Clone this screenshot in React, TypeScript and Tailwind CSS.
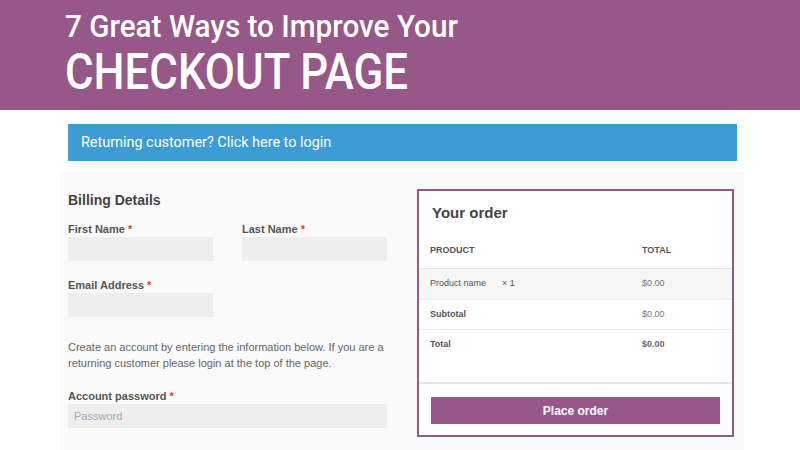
import React from 'react';

const Req = () => <span className="text-[#e2401c]"> *</span>;

function Field({ label, className, placeholder }: { label: string; className?: string; placeholder?: string }) {
  return (
    <div className={className}>
      <div className="text-[11px] leading-[14px] font-bold text-[#555]">
        {label}
        <Req />
      </div>
      <div className="mt-[1px] h-[24px] bg-[#eeeeee] flex items-center px-[6px] text-[11px] text-[#a8a8a8]">
        {placeholder}
      </div>
    </div>
  );
}

function OrderRow({ label, value, bold, shaded, qty }: { label: string; value: string; bold?: boolean; shaded?: boolean; qty?: string }) {
  return (
    <div className={`h-[30px] flex items-center border-t border-[#ebebeb] px-[11px] text-[9px] ${shaded ? 'bg-[#f6f6f6]' : ''}`}>
      <div className={`w-[212px] flex ${bold ? 'font-bold text-[#555]' : 'text-[#555]'}`}>
        <span>{label}</span>
        {qty && <span className="ml-[16px]">{qty}</span>}
      </div>
      <div className={bold && label === 'Total' ? 'font-bold text-[#666]' : 'text-[#777]'}>{value}</div>
    </div>
  );
}

export default function App() {
  return (
    <div className="w-[800px] h-[450px] bg-white overflow-hidden" style={{ fontFamily: '"Liberation Sans", Arial, sans-serif' }}>
      {/* Banner */}
      <div className="h-[110px] bg-[#955888] pl-[65px] pt-[6px] text-white" style={{ fontFamily: 'Roboto, sans-serif' }}>
        <div className="text-[32px] leading-[40px] font-medium origin-left scale-x-[0.928] whitespace-nowrap">7 Great Ways to Improve Your</div>
        <div className="text-[50px] leading-[50px] font-medium origin-left scale-x-[0.875] whitespace-nowrap mt-[1px]">CHECKOUT PAGE</div>
      </div>

      <div className="ml-[68px] mt-[14px] w-[669px] h-[37px] bg-[#3d9cd3] flex items-center pl-[13px] text-white" style={{ fontFamily: 'Roboto, sans-serif' }}>
        <span className="text-[15px] origin-left scale-x-[0.96] whitespace-nowrap">Returning customer? Click here to login</span>
      </div>

      <div className="ml-[60px] mt-[11px] w-[684px] h-[300px] bg-[#fafafa] flex pl-[8px] pt-[17px]">
        {/* Billing */}
        <div className="w-[319px] pt-[1px]">
          <div className="text-[14px] leading-[20px] font-bold text-[#444]">Billing Details</div>
          <div className="flex gap-[29px] mt-[12px]">
            <Field label="First Name" className="w-[145px]" />
            <Field label="Last Name" className="w-[145px]" />
          </div>
          <Field label="Email Address" className="w-[145px] mt-[17px]" />
          <p className="mt-[22px] text-[11px] leading-[16px] text-[#666]">
            Create an account by entering the information below. If you are a returning customer please login at the top of the page.
          </p>
          <Field label="Account password" className="mt-[18px]" placeholder="Password" />
        </div>

        {/* Order */}
        <div className="ml-[30px] w-[317px] h-[248px] border-2 border-[#955888] bg-white flex flex-col">
          <div className="pl-[13px] pt-[12px] text-[15px] leading-[20px] font-bold text-[#444]">Your order</div>
          <div className="h-[36px] mt-[10px] flex items-center px-[11px] text-[9px] font-bold text-[#555] border-b border-[#e3e3e3]">
            <div className="w-[212px]">PRODUCT</div>
            <div>TOTAL</div>
          </div>
          <div className="[&>div:first-child]:border-t-0">
            <OrderRow label="Product name" qty="× 1" value="$0.00" shaded />
            <OrderRow label="Subtotal" value="$0.00" bold />
            <OrderRow label="Total" value="$0.00" bold />
          </div>
          <div className="mt-[23px] border-t-2 border-[#e6e6e6] px-[12px] pt-[13px]">
            <div className="h-[27px] bg-[#955888] flex items-center justify-center text-white text-[12px] font-bold">Place order</div>
          </div>
        </div>
      </div>
    </div>
  );
}
